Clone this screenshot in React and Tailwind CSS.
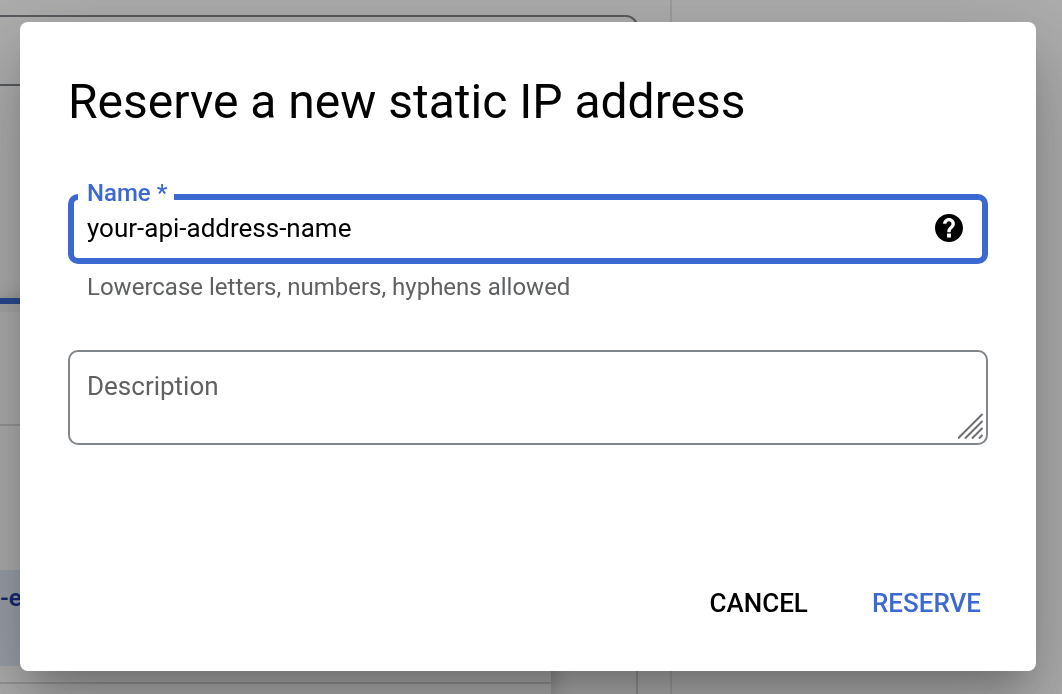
import React from "react";

function PageBehind() {
  return (
    <div aria-hidden="true" className="flex h-full overflow-hidden bg-white">
      <div className="flex w-[672px] shrink-0 flex-col border-r-2 border-[#e8e8e8]">
        <div className="mt-[15px] mr-8 h-[71px] shrink-0 rounded-r-xl border-2 border-l-0 border-[#80868b]" />
        <div className="mt-[212px] mr-8 flex grow border-r-2 border-[#d5d7da]">
          <div className="flex w-[551px] flex-col bg-white shadow-[0_4px_20px_rgba(0,0,0,0.3)]">
            <div className="h-[6px] bg-[#3b6bd6]" />
            <div className="h-2 bg-[#f5f5f5]" />
            <div className="h-[114px] border-b-2 border-[#dadce0]" />
            <div className="h-[144px]" />
            <div className="h-24 bg-[#e4ebf8] pt-3 text-2xl leading-8 font-semibold text-[#1f3bab]">-e</div>
            <div className="h-[18px] border-b-2 border-[#dadce0]" />
          </div>
        </div>
      </div>
      <div className="grow" />
    </div>
  );
}

function HelpIcon() {
  return (
    <svg viewBox="2 2 20 20" className="size-7" fill="currentColor" aria-hidden="true">
      <path d="M12 2C6.48 2 2 6.48 2 12s4.48 10 10 10 10-4.48 10-10S17.52 2 12 2zm1.400 16.800h-2.800v-2.800h2.800v2.800zm1.900-7.300-.9.92C13.6 13.200 13.200 13.700 13.200 15h-2.400v-.5c0-1.1.45-2.1 1.17-2.83l1.24-1.26c.37-.36.59-.86.59-1.41 0-1-.8-1.800-1.800-1.800s-1.800.8-1.800 1.800H7.800c0-2.300 1.900-4.200 4.200-4.200s4.200 1.900 4.200 4.200c0 .9-.36 1.900-.9 2.500z" />
    </svg>
  );
}

export default function App() {
  return (
    <div className="h-screen overflow-hidden font-[Roboto,sans-serif] text-black">
      <PageBehind />
      <div className="fixed inset-0 overflow-hidden bg-black/32 pt-[22px] pr-[26px] pl-5">
        <form
          role="dialog"
          aria-labelledby="dialog-title"
          onSubmit={(e) => e.preventDefault()}
          className="rounded-lg bg-white pt-12 pb-8 shadow-[0_22px_30px_-14px_rgba(0,0,0,0.2),0_48px_76px_6px_rgba(0,0,0,0.14),0_18px_92px_16px_rgba(0,0,0,0.12)]"
        >
          <div className="px-12">
            <h1 id="dialog-title" className="text-5xl leading-[64px]">Reserve a new static IP address</h1>
            <fieldset className="mt-[47px] rounded-[10px] border-[6px] border-[#3c69d1] pr-[19px] pl-1">
              <legend className="pr-[7px] pb-2 pl-[9px] text-2xl leading-6 font-medium text-[#3c69d1]">
                <label htmlFor="address-name">Name *</label>
              </legend>
              <div className="flex items-center pb-[15px] pl-[9px]">
                <input
                  id="address-name"
                  type="text"
                  defaultValue="your-api-address-name"
                  aria-describedby="name-hint"
                  className="h-[30px] min-w-0 grow text-[26px] leading-[30px] outline-none"
                />
                <button type="button" aria-label="Help">
                  <HelpIcon />
                </button>
              </div>
            </fieldset>
            <p id="name-hint" className="mt-2 pl-[19px] text-2xl leading-[30px] text-[#5f6062]">
              Lowercase letters, numbers, hyphens allowed
            </p>
            <div className="relative mt-12">
              <textarea
                aria-label="Description"
                placeholder="Description"
                className="block h-[95px] w-full resize-none rounded-[10px] border-2 border-[#80868b] px-[17px] pt-[18px] text-[26px] leading-8 outline-none placeholder:text-[#5f6062]"
              />
              <svg viewBox="0 0 26 26" className="pointer-events-none absolute right-1 bottom-1.5 size-[26px]" fill="none" stroke="#6e6e6e" strokeWidth="2" aria-hidden="true">
                <path d="M0 25.500 24.500 1M7 25.500 24.500 8M14 25.500 24.500 15M21 25.500 24.500 22" />
              </svg>
            </div>
          </div>
          <div className="mt-[122px] flex justify-end gap-8 pr-[39px]">
            <button type="button" className="h-[72px] px-4 text-[26px] font-medium">CANCEL</button>
            <button type="submit" className="h-[72px] px-4 text-[26px] font-medium text-[#3c69d1]">RESERVE</button>
          </div>
        </form>
      </div>
    </div>
  );
}
